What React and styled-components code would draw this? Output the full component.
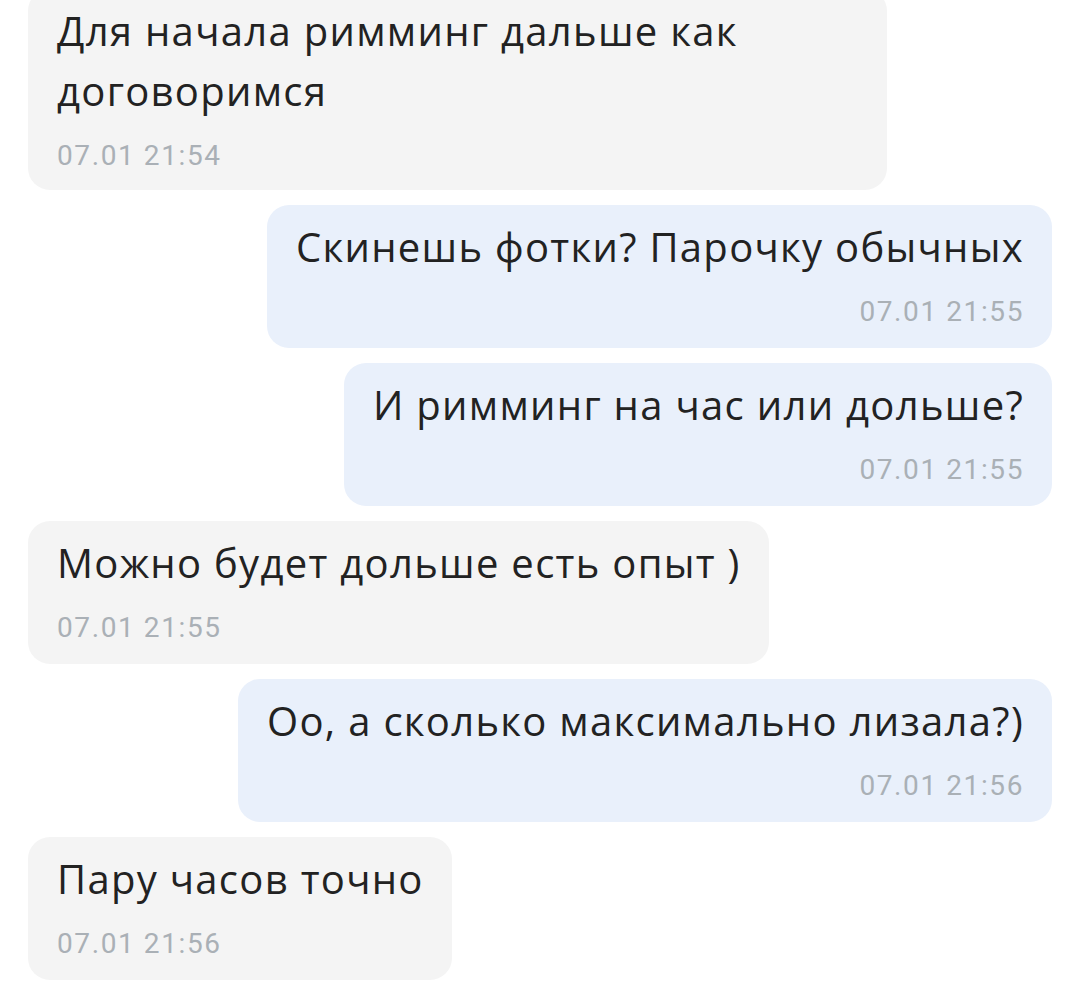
import React from 'react';
import styled, { createGlobalStyle } from 'styled-components';

const GlobalStyle = createGlobalStyle`
    html, body {
        margin: 0;
        padding: 0;
        background: #ffffff;
    }
    body {
        font-family: "Open Sans", "Noto Sans", sans-serif;
        overflow: hidden;
    }
`;

const messages = [
    { out: false, text: ['Для начала римминг дальше как', 'договоримся'], time: '07.01 21:54', wide: true },
    { out: true, text: ['Скинешь фотки? Парочку обычных'], time: '07.01 21:55' },
    { out: true, text: ['И римминг на час или дольше?'], time: '07.01 21:55' },
    { out: false, text: ['Можно будет дольше есть опыт )'], time: '07.01 21:55' },
    { out: true, text: ['Оо, а сколько максимально лизала?)'], time: '07.01 21:56' },
    { out: false, text: ['Пару часов точно'], time: '07.01 21:56' },
];

const App = () => {
    return(
        <>
            <GlobalStyle />
            <Chat>
                {messages.map((m, i) => (
                    <Bubble key={i} out={m.out ? 1 : 0} wide={m.wide ? 1 : 0}>
                        <Text>
                            {m.text.map((line, j) => (
                                <span key={j}>{line}</span>
                            ))}
                        </Text>
                        <Time out={m.out ? 1 : 0}>{m.time}</Time>
                    </Bubble>
                ))}
            </Chat>
        </>
    )
};

const Chat = styled.div`
    display: flex;
    flex-direction: column;
    gap: 15px;
    margin-top: -11px;
    padding: 0 28px;
`;

const Bubble = styled.div`
    align-self: ${p => p.out ? 'flex-end' : 'flex-start'};
    background: ${p => p.out ? '#e9f0fb' : '#f4f4f4'};
    border-radius: 22px;
    padding: 12px 28px 14px 29px;
    box-sizing: border-box;
    min-height: 143px;
    width: ${p => p.wide ? '859px' : 'auto'};
    max-width: 860px;
`;

const Text = styled.div`
    font-size: 40px;
    line-height: 60px;
    letter-spacing: 1.3px;
    color: #222222;
    span{
        display: block;
        white-space: nowrap;
    }
`;

const Time = styled.div`
    margin-top: 15px;
    font-family: Roboto, "Liberation Sans", sans-serif;
    font-size: 28px;
    line-height: 40px;
    letter-spacing: 1.6px;
    color: #aab0b6;
    text-align: ${p => p.out ? 'right' : 'left'};
`;

export default App;
